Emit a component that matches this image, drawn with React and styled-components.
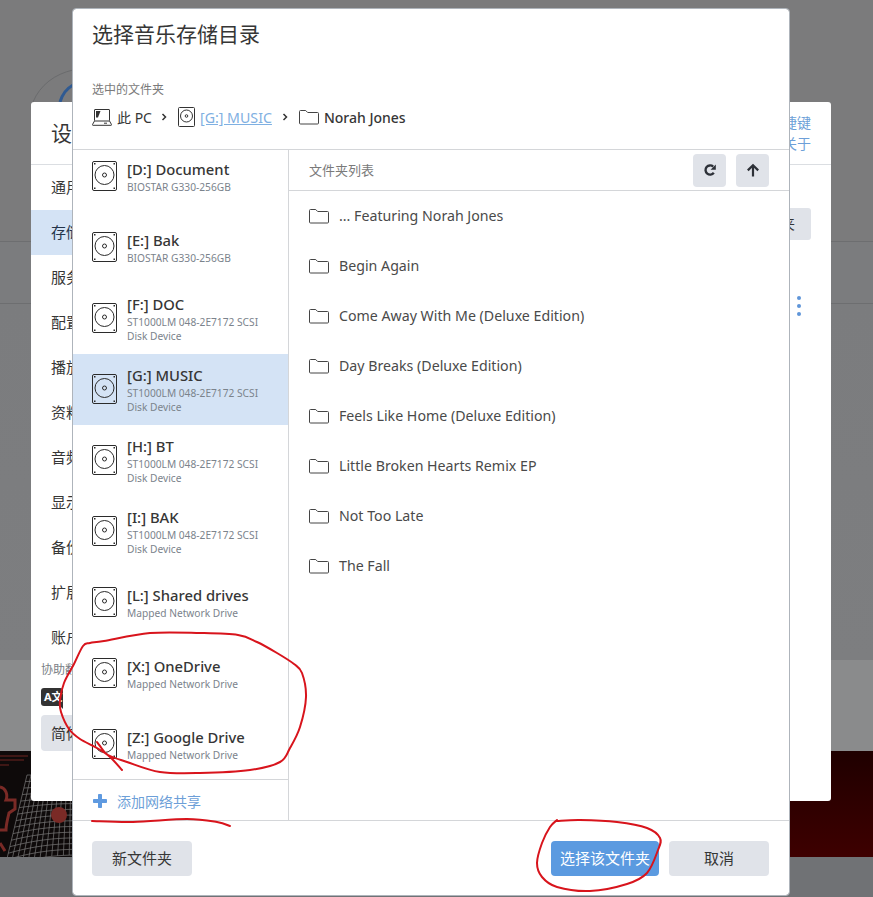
import styled, { createGlobalStyle } from "styled-components";

const GlobalStyle = createGlobalStyle`
  html, body {
    margin: 0;
    padding: 0;
    height: 897px;
    overflow: hidden;
    background: #7b7c7e;
  }
  * {
    box-sizing: border-box;
  }
  body {
    font-family: "Noto Sans", "Noto Sans CJK SC", sans-serif;
    color: #363636;
  }
`;

const Page = styled.div`
  position: relative;
  width: 873px;
  height: 897px;
  display: flex;
  flex-direction: column;
  overflow: hidden;
`;

const TopArea = styled.div`
  position: relative;
  height: 242px;
  background: #7b7b7c;
  border-bottom: 1px solid #6d6e70;
`;

const AvatarArc = styled.svg`
  position: absolute;
  left: 0;
  top: 0;
`;

const ToolRow = styled.div`
  height: 62px;
  background: #7b7c7e;
  border-bottom: 1px solid #6d6e70;
`;

const MiddleArea = styled.div`
  height: 356px;
  background: linear-gradient(#7b7c7e 0, #7d7e80 100%);
`;

const PlayerStrip = styled.div`
  height: 91px;
  background: #8a8b8c;
`;

const Banner = styled.svg`
  display: block;
  width: 873px;
  height: 106px;
  flex: none;
`;

const PageFoot = styled.div`
  flex: 1;
  background: #707275;
`;

const SettingsDialog = styled.div`
  position: absolute;
  left: 31px;
  top: 102px;
  width: 800px;
  height: 699px;
  background: #fff;
  border-radius: 3px;
`;

const SettingsHead = styled.div`
  height: 63px;
  display: flex;
  justify-content: space-between;
  padding: 0 20px;
  border-bottom: 1px solid #dbdee2;
`;

const SettingsTitle = styled.div`
  font-size: 21px;
  line-height: 63px;
`;

const HeadLinks = styled.div`
  display: flex;
  flex-direction: column;
  align-items: flex-end;
  padding-top: 10px;
  font-size: 14px;
  line-height: 21px;
  color: #6d9fd8;
`;

const SettingsBody = styled.div`
  display: flex;
`;

const SettingsNav = styled.div`
  width: 220px;
`;

const NavItem = styled.div`
  height: 45px;
  line-height: 45px;
  padding-left: 20px;
  font-size: 15px;
  background: ${(p) => (p.$active ? "#d4e3f5" : "transparent")};
  color: ${(p) => (p.$active ? "#24344a" : "#363636")};
`;

const TranslateLabel = styled.div`
  margin: 0 0 0 10px;
  font-size: 12px;
  line-height: 20px;
  color: #7a7f86;
`;

const LangBadge = styled.div`
  position: relative;
  width: 22px;
  height: 18px;
  margin: 8px 0 0 10px;
  padding-left: 3px;
  line-height: 18px;
  font-size: 11px;
  font-weight: 700;
  white-space: nowrap;
  color: #fff;
  background: #333;
  border-radius: 3px 3px 0 3px;
  &::after {
    content: "";
    position: absolute;
    right: 0;
    bottom: -3px;
    border-top: 3px solid #333;
    border-left: 3px solid transparent;
  }
`;

const LangSelect = styled.div`
  width: 120px;
  height: 36px;
  margin: 9px 0 0 10px;
  padding-left: 10px;
  line-height: 36px;
  font-size: 15px;
  background: #e0e3e9;
  border-radius: 4px;
`;

const SettingsMain = styled.div`
  flex: 1;
  position: relative;
`;

const ChooseButton = styled.div`
  margin: 43px 20px 0 auto;
  width: 120px;
  height: 32px;
  line-height: 32px;
  font-size: 14px;
  text-align: right;
  padding-right: 16px;
  background: #e0e3e9;
  border-radius: 3px;
`;

const MoreDots = styled.div`
  position: absolute;
  right: 30px;
  top: 131px;
  display: flex;
  flex-direction: column;
  gap: 4px;
  span {
    width: 4px;
    height: 4px;
    border-radius: 50%;
    background: #5f95d9;
  }
`;

const Modal = styled.div`
  position: absolute;
  left: 73px;
  top: 9px;
  width: 716px;
  height: 886px;
  background: #fff;
  border-radius: 3px;
  outline: 1px solid #aeb4bb;
  display: flex;
  flex-direction: column;
`;

const ModalHead = styled.div`
  height: 141px;
  padding: 0 19px;
  border-bottom: 1px solid #d4d6d9;
  flex: none;
`;

const ModalTitle = styled.h1`
  margin: 0;
  padding-top: 10px;
  font-size: 21px;
  line-height: 30px;
  font-weight: 400;
  color: #363636;
`;

const SelectedLabel = styled.div`
  margin-top: 32px;
  font-size: 12px;
  line-height: 18px;
  color: #7a7a7a;
`;

const Breadcrumb = styled.div`
  display: flex;
  align-items: center;
  margin-top: 3px;
  height: 30px;
  font-size: 14px;
`;

const CrumbText = styled.span`
  margin-left: ${(p) => p.$gap || 5}px;
  font-weight: ${(p) => (p.$strong ? 500 : 400)};
`;

const CrumbLink = styled.span`
  margin-left: 5px;
  font-size: 14.2px;
  color: #7fb0e2;
  text-decoration: underline;
`;

const CrumbSep = styled.svg`
  margin: 0 ${(p) => p.$right || 9}px 0 ${(p) => p.$left || 9}px;
  flex: none;
`;

const ModalBody = styled.div`
  flex: 1;
  display: flex;
  min-height: 0;
`;

const DrivePane = styled.div`
  width: 216px;
  flex: none;
  display: flex;
  flex-direction: column;
  border-right: 1px solid #d4d6d9;
`;

const DriveScroll = styled.div`
  flex: 1;
  overflow: hidden;
  min-height: 0;
`;

const DriveList = styled.div`
  margin-top: -9px;
`;

const DriveRow = styled.div`
  height: 71px;
  display: flex;
  align-items: center;
  gap: 10px;
  padding: 0 0 2px 19px;
  background: ${(p) => (p.$active ? "#d4e3f5" : "transparent")};
`;

const DriveInfo = styled.div`
  display: flex;
  flex-direction: column;
  padding-top: 1px;
`;

const DriveName = styled.div`
  font-size: 14.8px;
  line-height: 20px;
  font-weight: 500;
  color: #363636;
  margin-bottom: 1px;
`;

const DriveSub = styled.div`
  font-size: 10.2px;
  line-height: 14px;
  color: #7b838c;
  white-space: nowrap;
`;

const AddShare = styled.div`
  height: 41px;
  flex: none;
  display: flex;
  align-items: center;
  gap: 9px;
  padding: 1px 0 0 19px;
  border-top: 1px solid #d4d6d9;
  font-size: 14px;
  color: #6d9fd8;
`;

const FolderPane = styled.div`
  flex: 1;
  display: flex;
  flex-direction: column;
`;

const FolderHead = styled.div`
  height: 41px;
  flex: none;
  display: flex;
  align-items: center;
  padding: 0 20px 0 20px;
  gap: 10px;
  border-bottom: 1px solid #d4d6d9;
  font-size: 13px;
  color: #7a7a7a;
`;

const FolderHeadTitle = styled.div`
  flex: 1;
  padding-bottom: 2px;
`;

const IconButton = styled.div`
  width: 33px;
  height: 33px;
  display: flex;
  align-items: center;
  justify-content: center;
  background: #e0e3e9;
  border-radius: 4px;
`;

const FolderList = styled.div`
  margin-top: -1px;
`;

const FolderRow = styled.div`
  height: 50px;
  display: flex;
  align-items: center;
  gap: 10px;
  padding-left: 20px;
  font-size: 14.2px;
  color: #4a4a4a;
  svg {
    margin-top: 2px;
  }
`;

const ModalFoot = styled.div`
  height: 75px;
  flex: none;
  display: flex;
  align-items: center;
  gap: 10px;
  padding: 0 20px 0 19px;
  border-top: 1px solid #d4d6d9;
`;

const FootButton = styled.div`
  width: ${(p) => p.$width}px;
  height: 35px;
  line-height: 35px;
  text-align: center;
  font-size: 15px;
  border-radius: 4px;
  background: ${(p) => (p.$primary ? "#5b9ae0" : "#e0e3e9")};
  color: ${(p) => (p.$primary ? "#fff" : "#363636")};
  margin-right: ${(p) => (p.$push ? "auto" : "0")};
`;

const Annotations = styled.svg`
  position: absolute;
  left: 0;
  top: 0;
  pointer-events: none;
`;

const HddIcon = () => (
  <svg width="25" height="30" viewBox="0 0 25 30" fill="none" stroke="#2b2b2b" strokeWidth="1">
    <rect x="0.5" y="0.5" width="24" height="29" rx="1.5" />
    <circle cx="12.5" cy="14" r="9.5" />
    <circle cx="12.5" cy="14" r="2" />
    <g fill="#2b2b2b" stroke="none">
      <rect x="2" y="2" width="1.500" height="1.500" />
      <rect x="21.500" y="2" width="1.500" height="1.500" />
      <rect x="2" y="26.500" width="1.500" height="1.500" />
      <rect x="21.500" y="26.500" width="1.500" height="1.500" />
    </g>
  </svg>
);

const SmallHddIcon = () => (
  <svg width="17" height="20" viewBox="0 0 17 20" fill="none" stroke="#333" strokeWidth="1">
    <rect x="0.5" y="0.5" width="16" height="19" rx="1" />
    <circle cx="8.5" cy="9" r="6" />
    <circle cx="8.5" cy="9" r="1.3" />
  </svg>
);

const FolderIcon = () => (
  <svg width="20" height="15" viewBox="0 0 20 15" fill="none" stroke="#444" strokeWidth="1">
    <path d="M1.5 .5h5.200l2 2h9.800a1 1 0 0 1 1 1v9.500a1 1 0 0 1-1 1h-17a1 1 0 0 1-1-1v-11.500a1 1 0 0 1 1-1z" />
  </svg>
);

const LaptopIcon = () => (
  <svg width="20" height="17" viewBox="0 0 20 17" fill="none" stroke="#333" strokeWidth="1">
    <rect x="2.500" y="0.500" width="15" height="11.500" rx="0.500" />
    <path d="M2.500 12 L0.500 15.500 a.5 .5 0 0 0 .5 .8 h18 a.5 .5 0 0 0 .5 -.8 L17.500 12" />
    <path d="M4 2h4.500l-2.500 6.500h-2z" fill="#333" stroke="none" />
    <path d="M12 14.200h3" />
  </svg>
);

const RefreshIcon = () => (
  <svg width="14" height="14" viewBox="0 0 14 14" fill="none">
    <path d="M10.800 9.800A4.600 4.600 0 1 1 10.200 3.600" stroke="#2d3138" strokeWidth="2.400" />
    <path d="M12.800 1.500v5.200h-5.200z" fill="#2d3138" />
  </svg>
);

const UpIcon = () => (
  <svg width="14" height="14" viewBox="0 0 14 14" fill="none" stroke="#2d3138" strokeWidth="2.200">
    <path d="M7 13.500V2.500M1.800 7.400L7 2.200l5.200 5.200" />
  </svg>
);

const PlusIcon = () => (
  <svg width="16" height="16" viewBox="0 0 16 16" fill="#5f9ae0">
    <rect x="6" y="1" width="4" height="14" rx="0.800" />
    <rect x="1" y="6" width="14" height="4" rx="0.800" />
  </svg>
);

const Chevron = ({ left, right }) => (
  <CrumbSep $left={left} $right={right} width="6" height="8" viewBox="0 0 6 8" fill="none" stroke="#333" strokeWidth="1.500">
    <path d="M1.500 1 L4.500 4 L1.500 7" />
  </CrumbSep>
);

// 把手绘标注的点连成平滑曲线
const smoothPath = (pts) => {
  let d = `M${pts[0][0]} ${pts[0][1]}`;
  for (let i = 0; i < pts.length - 1; i++) {
    const p0 = pts[i - 1] || pts[i];
    const p1 = pts[i];
    const p2 = pts[i + 1];
    const p3 = pts[i + 2] || p2;
    const c1x = p1[0] + (p2[0] - p0[0]) / 6;
    const c1y = p1[1] + (p2[1] - p0[1]) / 6;
    const c2x = p2[0] - (p3[0] - p1[0]) / 6;
    const c2y = p2[1] - (p3[1] - p1[1]) / 6;
    d += ` C${c1x} ${c1y} ${c2x} ${c2y} ${p2[0]} ${p2[1]}`;
  }
  return d;
};

// 横幅里弯曲的网格
const meshPoint = (i, j) => [75 - i * (4 + j * 0.13), 24 + j * 5.8 + ((i / 12) * (i / 12) - 0.1) * j * 0.8];
const meshLines = () => {
  const lines = [];
  for (let i = 0; i <= 12; i++) {
    const pts = [];
    for (let j = 0; j <= 14; j++) pts.push(meshPoint(i, j).join(","));
    lines.push(pts.join(" "));
  }
  for (let j = 0; j <= 14; j++) {
    const pts = [];
    for (let i = 0; i <= 12; i++) pts.push(meshPoint(i, j).join(","));
    lines.push(pts.join(" "));
  }
  return lines;
};

const driveCircle = [
  [122, 770], [110, 757], [97, 748], [80, 739], [69, 729], [61, 712], [60, 700], [64, 683], [74, 664],
  [83, 646], [90, 643], [104, 641], [150, 633], [200, 633], [238, 635], [257, 642], [277, 653], [294, 664],
  [302, 673], [306, 697], [300, 727], [290, 748], [280, 762], [250, 770], [200, 773], [160, 772], [127, 762],
  [108, 755], [100, 746], [97, 742],
];
const shareLine = [[92, 821], [133, 822], [187, 819], [217, 822], [230, 826]];
const buttonCircle = [
  [557, 820], [550, 827], [542, 843], [537, 863], [542, 877], [557, 887], [590, 891], [627, 884], [647, 873],
  [658, 850], [660, 838], [647, 828], [617, 822], [580, 820], [557, 821],
];

const drives = [
  { name: "[D:] Document", sub: ["BIOSTAR G330-256GB"] },
  { name: "[E:] Bak", sub: ["BIOSTAR G330-256GB"] },
  { name: "[F:] DOC", sub: ["ST1000LM 048-2E7172 SCSI", "Disk Device"] },
  { name: "[G:] MUSIC", sub: ["ST1000LM 048-2E7172 SCSI", "Disk Device"], active: true },
  { name: "[H:] BT", sub: ["ST1000LM 048-2E7172 SCSI", "Disk Device"] },
  { name: "[I:] BAK", sub: ["ST1000LM 048-2E7172 SCSI", "Disk Device"] },
  { name: "[L:] Shared drives", sub: ["Mapped Network Drive"] },
  { name: "[X:] OneDrive", sub: ["Mapped Network Drive"] },
  { name: "[Z:] Google Drive", sub: ["Mapped Network Drive"] },
];

const folders = [
  "... Featuring Norah Jones",
  "Begin Again",
  "Come Away With Me (Deluxe Edition)",
  "Day Breaks (Deluxe Edition)",
  "Feels Like Home (Deluxe Edition)",
  "Little Broken Hearts Remix EP",
  "Not Too Late",
  "The Fall",
];

const navItems = ["通用", "存储", "服务", "配置", "播放", "资料库", "音频", "显示", "备份", "扩展", "账户"];

const App = () => {
  return (
    <Page>
      <GlobalStyle />
      <TopArea>
        <AvatarArc width="90" height="130" viewBox="0 0 90 130" fill="none">
          <path d="M33 102 C40 85 55 74 73 70" stroke="#6a6b6d" strokeWidth="1" />
          <path d="M60 102 C62 95 66 89 73 85" stroke="#2f5a92" strokeWidth="3" />
        </AvatarArc>
      </TopArea>
      <ToolRow />
      <MiddleArea />
      <PlayerStrip />
      <Banner viewBox="0 0 873 106" preserveAspectRatio="none">
        <defs>
          <linearGradient id="bannerRed" x1="0" y1="0" x2="0" y2="1">
            <stop offset="0" stopColor="#1f0000" />
            <stop offset="1" stopColor="#3e0000" />
          </linearGradient>
        </defs>
        <rect width="873" height="106" fill="#0e0a0a" />
        <rect x="780" width="93" height="106" fill="url(#bannerRed)" />
        <path d="M0 5h28M0 9h24M0 14h9" stroke="#6e2420" strokeWidth="1" />
        <g fill="none" stroke="#8c8c8c" strokeWidth="0.6">
          {meshLines().map((pts) => (
            <polyline key={pts} points={pts} />
          ))}
        </g>
        <path
          d="M0 36 C6 37 8 44 6 49 H15 V58 L9 62 C7 70 6 76 6 79 H0"
          fill="none"
          stroke="#7a2a26"
          strokeWidth="3"
        />
        <path d="M0 92 L5 100" stroke="#7a2a26" strokeWidth="3" />
        <circle cx="59" cy="64" r="8" fill="#7a2a26" />
      </Banner>
      <PageFoot />

      <SettingsDialog>
        <SettingsHead>
          <SettingsTitle>设置</SettingsTitle>
          <HeadLinks>
            <span>快捷键</span>
            <span>关于</span>
          </HeadLinks>
        </SettingsHead>
        <SettingsBody>
          <SettingsNav>
            {navItems.map((item) => (
              <NavItem key={item} $active={item === "存储"}>
                {item}
              </NavItem>
            ))}
            <TranslateLabel>协助翻译</TranslateLabel>
            <LangBadge>A文</LangBadge>
            <LangSelect>简体中文</LangSelect>
          </SettingsNav>
          <SettingsMain>
            <ChooseButton>选择文件夹</ChooseButton>
            <MoreDots>
              <span />
              <span />
              <span />
            </MoreDots>
          </SettingsMain>
        </SettingsBody>
      </SettingsDialog>

      <Modal>
        <ModalHead>
          <ModalTitle>选择音乐存储目录</ModalTitle>
          <SelectedLabel>选中的文件夹</SelectedLabel>
          <Breadcrumb>
            <LaptopIcon />
            <CrumbText $gap={5}>此 PC</CrumbText>
            <Chevron left={9} right={11} />
            <SmallHddIcon />
            <CrumbLink>[G:] MUSIC</CrumbLink>
            <Chevron left={10} right={11} />
            <FolderIcon />
            <CrumbText $strong>Norah Jones</CrumbText>
          </Breadcrumb>
        </ModalHead>
        <ModalBody>
          <DrivePane>
            <DriveScroll>
              <DriveList>
                {drives.map((d) => (
                  <DriveRow key={d.name} $active={d.active}>
                    <HddIcon />
                    <DriveInfo>
                      <DriveName>{d.name}</DriveName>
                      {d.sub.map((s) => (
                        <DriveSub key={s}>{s}</DriveSub>
                      ))}
                    </DriveInfo>
                  </DriveRow>
                ))}
              </DriveList>
            </DriveScroll>
            <AddShare>
              <PlusIcon />
              添加网络共享
            </AddShare>
          </DrivePane>
          <FolderPane>
            <FolderHead>
              <FolderHeadTitle>文件夹列表</FolderHeadTitle>
              <IconButton>
                <RefreshIcon />
              </IconButton>
              <IconButton>
                <UpIcon />
              </IconButton>
            </FolderHead>
            <FolderList>
              {folders.map((f) => (
                <FolderRow key={f}>
                  <FolderIcon />
                  {f}
                </FolderRow>
              ))}
            </FolderList>
          </FolderPane>
        </ModalBody>
        <ModalFoot>
          <FootButton $width={100} $push>
            新文件夹
          </FootButton>
          <FootButton $width={108} $primary>
            选择该文件夹
          </FootButton>
          <FootButton $width={100}>取消</FootButton>
        </ModalFoot>
      </Modal>

      <Annotations width="873" height="897" viewBox="0 0 873 897" fill="none" stroke="#d8141c" strokeWidth="2" strokeLinecap="round">
        <path d={smoothPath(driveCircle)} />
        <path d={smoothPath(shareLine)} />
        <path d={smoothPath(buttonCircle)} />
      </Annotations>
    </Page>
  );
};

export default App;
